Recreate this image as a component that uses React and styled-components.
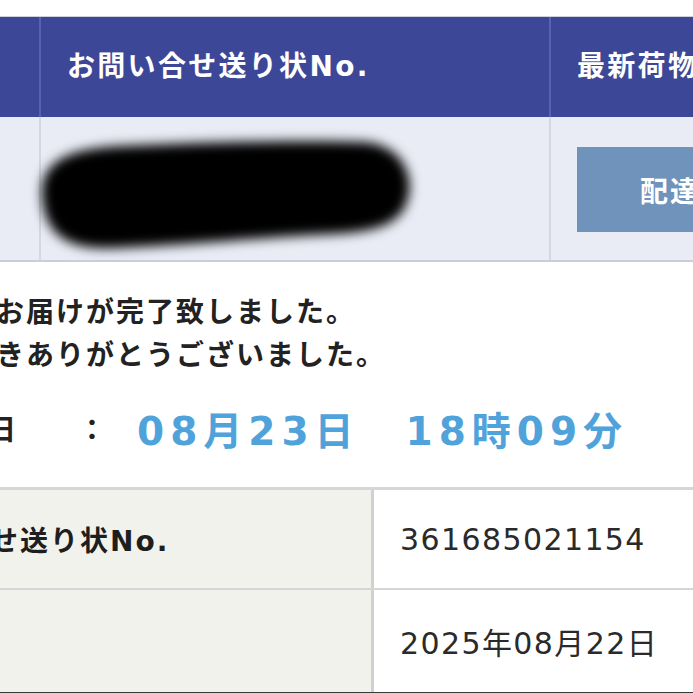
import React from "react";
import styled, { createGlobalStyle } from "styled-components";

const Global = createGlobalStyle`
  html, body { margin: 0; padding: 0; background: #ffffff; }
  body { font-family: "DejaVu Sans", "Noto Sans CJK JP", sans-serif; }
`;

const FONT = `"DejaVu Sans", "Noto Sans CJK JP", sans-serif`;

const Page = styled.div`
  width: 693px;
  height: 693px;
  overflow: hidden;
  background: #ffffff;
`;

const Canvas = styled.div`
  width: 1000px;
  margin-left: -200px;
  padding-top: 16px;
  font-family: ${FONT};
`;

const TrackTable = styled.div`
  display: grid;
  grid-template-columns: 239px 510px 1fr;
  grid-template-rows: 100px 143px;
  border-top: 1px solid #cfd2de;
  border-bottom: 2px solid #cbced8;
`;

const HeadCell = styled.div`
  background: #3d4797;
  color: #ffffff;
  font-weight: 700;
  font-size: 28px;
  letter-spacing: 2.3px;
  display: flex;
  align-items: center;
  padding: 0 0 6px 26px;
  box-sizing: border-box;
  border-left: ${(p) => (p.$first ? "none" : "2px solid #5862b4")};
  white-space: nowrap;
  overflow: hidden;
`;

const BodyCell = styled.div`
  background: #e9ecf5;
  border-left: ${(p) => (p.$first ? "none" : "2px solid #d5d8e4")};
  display: flex;
  align-items: center;
  overflow: ${(p) => (p.$visible ? "visible" : "hidden")};
  position: relative;
`;

const Redaction = styled.svg`
  position: absolute;
  left: 0;
  top: 0;
  width: 510px;
  height: 143px;
  overflow: visible;
`;

const StatusButton = styled.div`
  margin-left: 26px;
  margin-top: 2px;
  width: 300px;
  height: 85px;
  background: #6f93ba;
  color: #ffffff;
  font-weight: 700;
  font-size: 28px;
  letter-spacing: 2px;
  display: flex;
  align-items: center;
  padding-left: 63px;
  box-sizing: border-box;
  white-space: nowrap;
`;

const Message = styled.div`
  padding: 29px 0 34px 76px;
  color: #222222;
  font-weight: 700;
`;

const Line = styled.div`
  font-size: 28px;
  letter-spacing: 2px;
  line-height: 43px;
  white-space: nowrap;
`;

const DateRow = styled.div`
  display: flex;
  align-items: center;
  height: 50px;
  margin-top: 26px;
  white-space: nowrap;
`;

const DateLabel = styled.div`
  width: 140px;
  text-align: right;
  font-size: 28px;
`;

const Colon = styled.div`
  margin-left: 62px;
  font-size: 28px;
  width: 28px;
  text-align: center;
`;

const DateValue = styled.div`
  margin-left: 31px;
  display: flex;
  gap: 46px;
  color: #4fa3da;
  font-size: 39px;
  letter-spacing: 6px;
  font-weight: 700;
`;

const InfoTable = styled.div`
  display: flex;
  flex-direction: column;
  border-top: 3px solid #d6d6d6;
  border-bottom: 3px solid #3a3a3a;
`;

const InfoRow = styled.div`
  display: flex;
  height: ${(p) => p.$h}px;
  border-top: ${(p) => (p.$divided ? "2px solid #d6d6d6" : "none")};
  background: #f2f2ed;
`;

const InfoLabel = styled.div`
  width: 571px;
  flex: none;
  background: #f2f2ed;
  display: flex;
  align-items: center;
  padding-left: 70px;
  box-sizing: border-box;
  font-weight: 700;
  font-size: 28px;
  letter-spacing: 2px;
  color: #1e1e1e;
  white-space: nowrap;
`;

const InfoValue = styled.div`
  flex: 1;
  background: #ffffff;
  display: flex;
  align-items: center;
  padding-left: 26px;
  border-left: 3px solid #d0d0d0;
  font-size: 30px;
  letter-spacing: 1.4px;
  color: #2a2a2a;
  white-space: nowrap;
`;

export default function App() {
  return (
    <Page>
      <Global />
      <Canvas>
        <TrackTable>
          <HeadCell $first />
          <HeadCell>お問い合せ送り状No.</HeadCell>
          <HeadCell>最新荷物状況</HeadCell>
          <BodyCell $first />
          <BodyCell $visible>
            <Redaction viewBox="39 117 510 143">
              <defs>
                <filter id="smudge" x="-20%" y="-40%" width="140%" height="180%">
                  <feGaussianBlur stdDeviation="6" />
                </filter>
              </defs>
              <path
                filter="url(#smudge)"
                fill="#000"
                d="M 40 195 C 38 160, 70 148, 120 146 C 200 142, 300 140, 360 142 C 402 144, 412 178, 406 198 C 400 225, 372 232, 330 234 C 250 238, 170 246, 110 248 C 58 250, 42 228, 40 195 Z"
              />
            </Redaction>
          </BodyCell>
          <BodyCell>
            <StatusButton>配達完了</StatusButton>
          </BodyCell>
        </TrackTable>

        <Message>
          <Line>お荷物のお届けが完了致しました。</Line>
          <Line>ご利用頂きありがとうございました。</Line>
          <DateRow>
            <DateLabel>お届け日</DateLabel>
            <Colon>：</Colon>
            <DateValue>
              <span>08月23日</span>
              <span>18時09分</span>
            </DateValue>
          </DateRow>
        </Message>

        <InfoTable>
          <InfoRow $h={98}>
            <InfoLabel>お問い合せ送り状No.</InfoLabel>
            <InfoValue>361685021154</InfoValue>
          </InfoRow>
          <InfoRow $h={102} $divided>
            <InfoLabel />
            <InfoValue>2025年08月22日</InfoValue>
          </InfoRow>
        </InfoTable>
      </Canvas>
    </Page>
  );
}
